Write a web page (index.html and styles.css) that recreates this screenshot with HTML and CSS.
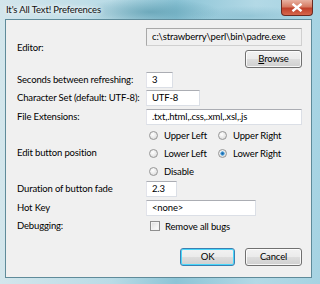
FILE: index.html
```html
<!DOCTYPE html>
<html lang="en">

<head>
    <meta charset="UTF-8">
    <title>It's All Text! Preferences</title>
    <link rel="stylesheet" href="styles.css">
</head>

<body>

    <div class="window">
        <div class="titlebar">
            <span class="title">It's All Text! Preferences</span>
            <div class="close">
                <svg width="12" height="9" viewBox="0 0 12 9">
                    <path d="M1.5 0.8 L10.5 8.2 M10.5 0.8 L1.5 8.2" stroke="#fff" stroke-width="2.4" fill="none"/>
                </svg>
            </div>
        </div>

        <div class="client">
            <div class="row editor-row">
                <div class="label">Editor:</div>
                <div class="field editor-field">
                    <div class="input wide readonly">c:\strawberry\perl\bin\padre.exe</div>
                    <button class="btn"><u>B</u>rowse</button>
                </div>
            </div>

            <div class="row r-seconds">
                <div class="label">Seconds between refreshing:</div>
                <div class="field"><div class="input w-seconds">3</div></div>
            </div>

            <div class="row r-charset">
                <div class="label">Character Set (default: UTF-8):</div>
                <div class="field"><div class="input w-charset">UTF-8</div></div>
            </div>

            <div class="row r-ext">
                <div class="label">File Extensions:</div>
                <div class="field"><div class="input wide">.txt,.html,.css,.xml,.xsl,.js</div></div>
            </div>

            <div class="row r-position">
                <div class="label">Edit button position</div>
                <div class="field radios">
                    <label class="opt"><input type="radio" name="pos">Upper Left</label>
                    <label class="opt"><input type="radio" name="pos">Upper Right</label>
                    <label class="opt"><input type="radio" name="pos">Lower Left</label>
                    <label class="opt"><input type="radio" name="pos" checked>Lower Right</label>
                    <label class="opt"><input type="radio" name="pos">Disable</label>
                </div>
            </div>

            <div class="row r-fade">
                <div class="label">Duration of button fade</div>
                <div class="field"><div class="input w-fade">2.3</div></div>
            </div>

            <div class="row r-hotkey">
                <div class="label">Hot Key</div>
                <div class="field"><div class="input w-hotkey">&lt;none&gt;</div></div>
            </div>

            <div class="row r-debug">
                <div class="label">Debugging:</div>
                <div class="field">
                    <label class="opt check"><input type="checkbox">Remove all bugs</label>
                </div>
            </div>

            <div class="actions">
                <button class="btn default">OK</button>
                <button class="btn">Cancel</button>
            </div>
        </div>
    </div>

</body>

</html>
```

FILE: styles.css
```css
body {
    margin: 0;
    padding: 0;
    font-family: 'Lato', sans-serif;
    font-size: 9.5px;
    letter-spacing: -0.15px;
    color: #000;
}

.window {
    width: 320px;
    height: 284px;
    box-sizing: border-box;
    padding: 0 8px 6px 5px;
    display: flex;
    flex-direction: column;
    background:
        radial-gradient(ellipse 70px 14px at 150px 12px, rgba(70, 140, 160, 0.55), rgba(70, 140, 160, 0)),
        radial-gradient(ellipse 60px 10px at 250px 16px, rgba(120, 180, 200, 0.5), rgba(120, 180, 200, 0)),
        linear-gradient(90deg, #d3e6ec 0%, #b9dbe6 35%, #8cc4d6 55%, #b3d9e6 80%, #a6d3e2 100%);
}

.titlebar {
    height: 19px;
    display: flex;
    justify-content: space-between;
    align-items: flex-start;
}

.title {
    margin: 3px 0 0 1px;
    line-height: 14px;
    color: #111;
    white-space: nowrap;
    text-shadow: 0 0 4px #fff, 0 0 6px #fff;
}

.close {
    width: 30px;
    height: 15px;
    margin-right: -1px;
    border: 1px solid #6a2b22;
    border-top: none;
    border-radius: 0 0 4px 4px;
    display: flex;
    align-items: center;
    justify-content: center;
    background: linear-gradient(#e8b2a2 0%, #d67b63 45%, #c0402a 55%, #d6674c 100%);
}

.client {
    flex: 1;
    min-height: 0;
    border: 1px solid #5f8b9a;
    background-color: #f0f0f0;
    padding: 8px 9px 0 11px;
    display: flex;
    flex-direction: column;
}

.row {
    display: flex;
    align-items: center;
}

.label {
    width: 129px;
    flex: none;
    line-height: 14px;
    white-space: nowrap;
}

.field {
    flex: 1;
}

.editor-field {
    display: flex;
    flex-direction: column;
    align-items: flex-end;
    gap: 4px;
}

.input {
    box-sizing: border-box;
    height: 16px;
    padding: 0 5px;
    line-height: 14px;
    white-space: nowrap;
    overflow: hidden;
    background-color: #fff;
    border: 1px solid #dbdfe6;
    border-top-color: #abadb3;
    border-left-color: #e2e3ea;
}

.input.readonly {
    height: 18px;
    line-height: 16px;
    background-color: #f0f0f0;
    border: 1px solid #a8a8a8;
    border-right-color: #d0d0d0;
    border-bottom-color: #d0d0d0;
}

.wide { width: 156px; }
.w-seconds { width: 27px; }
.w-charset { width: 54px; }
.w-fade { width: 31px; }
.w-hotkey { width: 110px; }

.r-seconds { margin-top: 4px; }
.r-charset { margin-top: 2px; }
.r-ext { margin-top: 3px; }
.r-position { margin-top: 1px; }
.r-fade { margin-top: 1px; }
.r-hotkey { margin-top: 3px; }
.r-debug { margin-top: 2px; height: 16px; }

.radios {
    display: grid;
    grid-template-columns: 69px auto;
    grid-auto-rows: 18px;
    padding-left: 3px;
}

.opt {
    display: flex;
    align-items: center;
    gap: 6px;
    white-space: nowrap;
}

.opt input {
    appearance: none;
    margin: 0;
    width: 9px;
    height: 9px;
    flex: none;
    border: 1px solid #979797;
    border-radius: 50%;
    background: radial-gradient(circle at 40% 35%, #ffffff 0%, #e6e6e6 60%, #cfcfcf 100%);
}

.opt input:checked {
    background:
        radial-gradient(circle at 50% 50%, #1a5f9e 0%, #2e86c8 25%, #7fbde6 42%, rgba(255, 255, 255, 0) 48%),
        radial-gradient(circle at 40% 35%, #ffffff 0%, #e6e6e6 60%, #cfcfcf 100%);
}

.check {
    padding-left: 4px;
    gap: 5px;
}

.check input {
    border-radius: 0;
    width: 10px;
    height: 10px;
    border-color: #8f8f8f;
    background: linear-gradient(135deg, #dcdcdc 0%, #f4f4f4 60%, #ffffff 100%);
    box-shadow: inset 0 0 0 1px #f4f4f4;
}

.btn {
    box-sizing: border-box;
    width: 57px;
    height: 18px;
    padding: 0;
    font-family: inherit;
    font-size: inherit;
    letter-spacing: inherit;
    line-height: 14px;
    color: #000;
    border: 1px solid #707070;
    border-radius: 3px;
    background: linear-gradient(#f2f2f2 0%, #ebebeb 48%, #dddddd 52%, #cfcfcf 100%);
    box-shadow: inset 0 0 0 1px rgba(255, 255, 255, 0.8);
}

.btn u {
    text-decoration: underline;
}

.btn.default {
    width: 55px;
    border-color: #3c7fb1;
    box-shadow: inset 0 0 0 1px #48d7fb;
}

.actions {
    margin-top: 14px;
    display: flex;
    justify-content: flex-end;
    gap: 10px;
}
```
